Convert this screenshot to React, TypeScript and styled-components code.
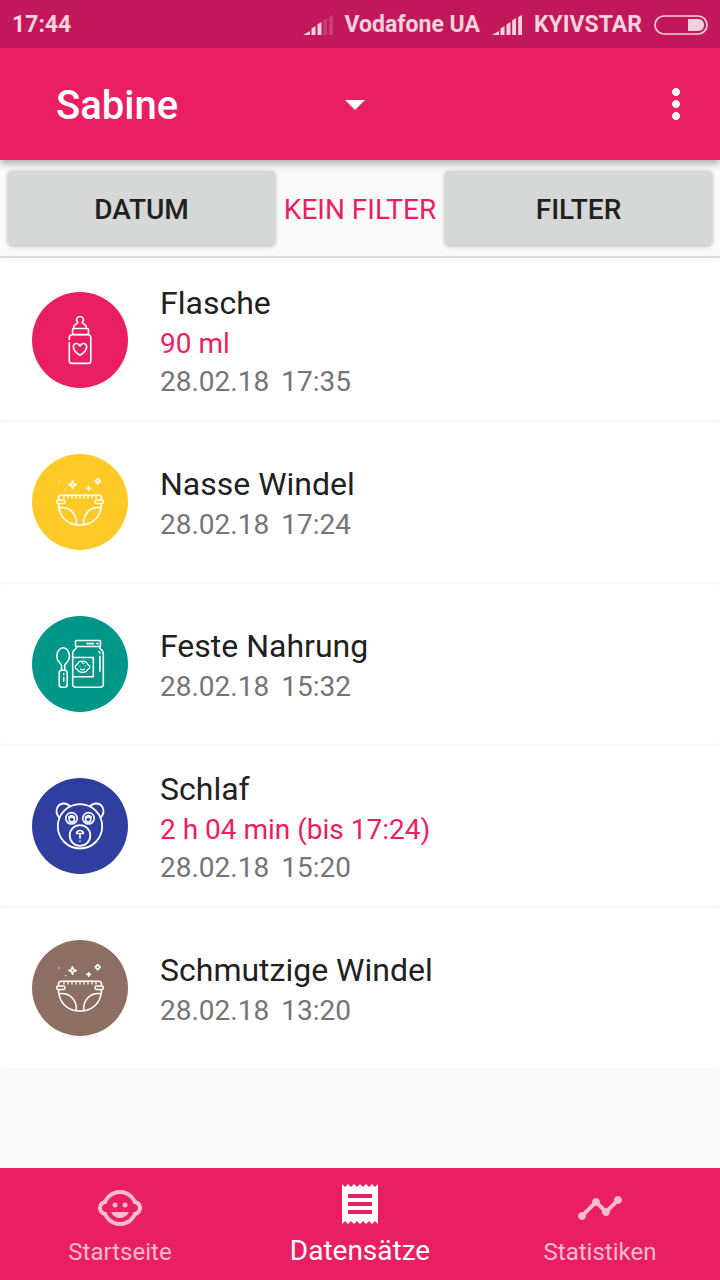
import React from "react";
import styled, { createGlobalStyle } from "styled-components";
import {
  MdArrowDropDown,
  MdChildCare,
  MdMoreVert,
  MdReceipt,
  MdTimeline,
} from "react-icons/md";

const PINK = "#ea1e63";

const GlobalStyle = createGlobalStyle`
  *, *::before, *::after { box-sizing: border-box; }
  body {
    margin: 0;
    background: #fafafa;
    color: #212121;
    font-family: Roboto, "Liberation Sans", sans-serif;
  }
  svg { display: block; }
`;

const Screen = styled.div`
  display: flex;
  flex-direction: column;
  min-height: 100vh;
`;

const StatusBar = styled.div`
  position: relative;
  z-index: 2;
  display: flex;
  align-items: center;
  gap: 12px;
  height: 48px;
  padding: 2px 12px 0;
  background: #c2185b;
  color: #f5d1de;
  font-size: 23px;
  font-weight: 700;
  line-height: 28px;
`;

const Clock = styled.time`
  margin-right: auto;
`;

const AppBar = styled.header`
  position: relative;
  z-index: 1;
  display: flex;
  align-items: center;
  justify-content: space-between;
  height: 112px;
  padding: 0 20px 0 56px;
  background: ${PINK};
  color: #fff;
  box-shadow: 0 3px 8px rgba(0, 0, 0, 0.35);
`;

const ChildPicker = styled.label`
  display: grid;
  flex: 0 1 323px;
  align-items: center;

  & > * { grid-area: 1 / 1; }
  & > svg { justify-self: end; pointer-events: none; }
`;

const ChildSelect = styled.select`
  appearance: none;
  width: 100%;
  height: 60px;
  padding: 4px 0 0;
  border: 0;
  background: transparent;
  color: inherit;
  font: 500 40px/56px Roboto, "Liberation Sans", sans-serif;

  option { color: #212121; }
`;

const IconButton = styled.button`
  padding: 0;
  border: 0;
  background: none;
  color: inherit;
`;

const FilterBar = styled.section`
  display: flex;
  align-items: center;
  gap: 8px;
  padding: 11px 8px;
  border-bottom: 2px solid #dcdcdc;
`;

const FilterButton = styled.button`
  flex: 1 1 0;
  height: 74px;
  padding: 4px 0 0;
  border: 0;
  border-radius: 4px;
  background: #d6d8d7;
  color: #212121;
  font: 500 28px/36px Roboto, "Liberation Sans", sans-serif;
  text-transform: uppercase;
  box-shadow: 0 1px 4px rgba(0, 0, 0, 0.3);
`;

const FilterState = styled.span`
  min-width: 154px;
  padding-top: 4px;
  color: ${PINK};
  font-size: 28px;
  line-height: 36px;
  text-align: center;
  text-transform: uppercase;
`;

const Records = styled.ul`
  display: flex;
  flex: 1;
  flex-direction: column;
  gap: 2px;
  margin: 0;
  padding: 2px 0;
  list-style: none;
`;

const Record = styled.li`
  display: flex;
  align-items: center;
  gap: 32px;
  height: 160px;
  padding: 0 32px;
  border-radius: 4px;
  background: #fff;
  box-shadow: 0 0 2px rgba(0, 0, 0, 0.05);
`;

const Badge = styled.span<{ $color: string }>`
  flex: none;
  width: 96px;
  height: 96px;
  border-radius: 50%;
  background: ${(p) => p.$color};
`;

const RecordText = styled.div`
  padding-top: 2px;
`;

const RecordTitle = styled.h2`
  margin: 0;
  font-size: 32px;
  font-weight: 400;
  line-height: 44px;
`;

const RecordDetail = styled.p`
  margin: 0;
  color: ${PINK};
  font-size: 28px;
  line-height: 38px;
`;

const RecordTime = styled.time`
  display: flex;
  gap: 12px;
  color: #757575;
  font-size: 28px;
  line-height: 38px;
`;

const BottomNav = styled.nav`
  display: flex;
  height: 112px;
  background: ${PINK};
`;

const NavLink = styled.a<{ $active?: boolean }>`
  display: flex;
  flex: 1 1 0;
  flex-direction: column;
  align-items: center;
  justify-content: space-between;
  padding: ${(p) => (p.$active ? "12px" : "16px")} 0 12px;
  color: ${(p) => (p.$active ? "#fff" : "#f9bbd0")};
  font-size: ${(p) => (p.$active ? "28px" : "24px")};
  line-height: ${(p) => (p.$active ? "34px" : "32px")};
  text-decoration: none;
`;

const BARS = [
  "M0 20 L7 16 V20Z",
  "M8.500 13.500 L12.500 11 V20 H8.500Z",
  "M14.500 9.500 L18.500 7 V20 H14.500Z",
  "M20.200 5.500 L24 3 V20 H20.200Z",
  "M26.200 2 L30 0 V20 H26.200Z",
];

const Signal = ({ level }: { level: number }) => (
  <svg width="30" height="20" viewBox="0 0 30 20" fill="currentColor" aria-hidden="true">
    {BARS.map((d, i) => (
      <path key={d} d={d} opacity={i < level ? 1 : 0.2} />
    ))}
  </svg>
);

const Battery = () => (
  <svg width="54" height="20" viewBox="0 0 54 20" aria-hidden="true">
    <rect x="1" y="1" width="52" height="18" rx="9" fill="none" stroke="currentColor" strokeWidth="1.700" />
    <path d="M34 4 H44 C48 4 50 7 50 10 C50 13 48 16 44 16 H34Z" fill="currentColor" />
  </svg>
);

const Drawing = ({ children }: { children: React.ReactNode }) => (
  <svg
    width="96"
    height="96"
    viewBox="0 0 96 96"
    fill="none"
    stroke="#fff"
    strokeWidth="1.600"
    strokeLinecap="round"
    strokeLinejoin="round"
    aria-hidden="true"
  >
    {children}
  </svg>
);

const BottleIcon = () => (
  <Drawing>
    <path d="M41.500 36.500 C41.500 33.500 43 32.300 45 31.500 C46 31 45.800 30.300 45.200 29.500 C43.500 27 45.200 24.500 48 24.500 C50.800 24.500 52.500 27 50.800 29.500 C50.200 30.300 50 31 51 31.500 C53 32.300 54.500 33.500 54.500 36.500" />
    <rect x="40.500" y="36.500" width="16" height="6" rx="1.500" />
    <path d="M37.300 47.500 V45.500 Q37.300 42.700 40 42.700 H56 Q58.800 42.700 58.800 45.500 V68.800 Q58.800 71.400 56 71.400 H40 Q37.300 71.400 37.300 68.800 V50.500" />
    <path d="M48 63.300 C45 61.500 41.400 58.500 41.400 55 C41.400 51 46 50.200 48 54 C50 50.200 54.600 51 54.600 55 C54.600 58.500 51 61.500 48 63.300Z" />
  </Drawing>
);

const DiaperIcon = () => (
  <Drawing>
    <path d="M26.500 46 V44 Q26.500 41.200 29.500 41.200 H66.500 Q69.500 41.200 69.500 44 V46" />
    <path d="M32 41.200 V44 M36 41.200 V44 M40 41.200 V44 M44 41.200 V44 M48 41.200 V44 M52 41.200 V44 M56 41.200 V44 M60 41.200 V44 M64 41.200 V44" strokeWidth="1.300" />
    <rect x="24.800" y="46" width="8" height="3.500" rx="1.200" />
    <rect x="63.200" y="46" width="8" height="3.500" rx="1.200" />
    <path d="M26.500 49.500 C26.500 62 35 71 48 71 C61 71 69.500 62 69.500 49.500" />
    <path d="M27.500 53.700 C38 52.500 45 60 44.300 70.500 M68.500 53.700 C58 52.500 51 60 51.700 70.500" />
    <path d="M40.500 26.800 L41.500 29.500 L44.200 30.500 L41.500 31.500 L40.500 34.200 L39.500 31.500 L36.800 30.500 L39.500 29.500Z" />
    <path d="M56.700 32.500 V36.300 M54.800 34.400 H58.600" />
    <path d="M65.700 24.600 L68.200 27.100 L65.700 29.600 L63.200 27.100Z" />
    <path d="M27 28 H27.100 M33.500 35.700 H33.600" strokeWidth="1.300" />
  </Drawing>
);

const JarIcon = () => (
  <Drawing>
    <rect x="43.500" y="24.500" width="25" height="6" rx="1" />
    <path d="M55 27.600 H61.500 M65 27.600 H66" />
    <path d="M44.500 30.500 C44.500 34 40.700 33.500 40.700 37.500 V68 Q40.700 71.300 44 71.300 H68 Q71.300 71.300 71.300 68 V37.500 C71.300 33.500 67.500 34 67.500 30.500" />
    <path d="M40.700 41.500 H61.300 V60.800 H40.700" />
    <path d="M67 35.500 Q67.900 36 67.900 37.200 M67.900 40.300 V55.300" />
    <path d="M45.200 48.700 C46.500 43.800 54.500 43.800 55.800 48.700 C58.500 49.500 58.500 52.500 55.800 53.300 C54 57.500 47 57.500 45.200 53.300 C42.500 52.500 42.500 49.500 45.200 48.700Z M50.500 45.300 Q49.500 47.500 52 47.500 M47.700 50 H47.800 M53.300 50 H53.400 M48.300 52.800 Q50.500 55 52.700 52.800" strokeWidth="1.200" />
    <path d="M29.500 54 V49.500 C29.500 47.500 24.800 46 24.800 40.500 C24.800 35.500 27.800 31.800 31.200 31.800 C34.600 31.800 37.500 35.500 37.500 40.500 C37.500 46 32.700 47.500 32.700 49.500 V54" />
    <rect x="27.200" y="54.300" width="8" height="17" rx="2.800" />
    <path d="M31.700 57.500 V58.500 M31.700 61.500 V65.300" />
  </Drawing>
);

const BearIcon = () => (
  <Drawing>
    <circle cx="48" cy="48.300" r="22.200" strokeWidth="1.800" />
    <path d="M26.800 39 C22 33 25.500 25.500 32 25.500 C34.500 25.500 36.500 26.700 38 28.500 M69.200 39 C74 33 70.500 25.500 64 25.500 C61.500 25.500 59.500 26.700 58 28.500" strokeWidth="1.800" />
    <circle cx="39.500" cy="40.300" r="5.700" />
    <circle cx="56.500" cy="40.300" r="5.700" />
    <circle cx="39.800" cy="41.500" r="2.600" />
    <circle cx="56.200" cy="41.500" r="2.600" />
    <path d="M36.500 39 Q39.700 35.800 42.800 39 M53.200 39 Q56.300 35.800 59.500 39" strokeWidth="1.300" />
    <circle cx="48" cy="57.500" r="10.300" strokeWidth="1.800" />
    <path d="M44.500 55.500 C45 51.500 51 51.500 51.500 55.500Z M48 56 V60.300 M48 63 V63.100" />
  </Drawing>
);

type Entry = {
  title: string;
  detail?: string;
  date: string;
  clock: string;
  color: string;
  icon: React.ReactNode;
};

const ENTRIES: Entry[] = [
  { title: "Flasche", detail: "90 ml", date: "28.02.18", clock: "17:35", color: PINK, icon: <BottleIcon /> },
  { title: "Nasse Windel", date: "28.02.18", clock: "17:24", color: "#ffca28", icon: <DiaperIcon /> },
  { title: "Feste Nahrung", date: "28.02.18", clock: "15:32", color: "#009688", icon: <JarIcon /> },
  { title: "Schlaf", detail: "2 h 04 min (bis 17:24)", date: "28.02.18", clock: "15:20", color: "#303f9f", icon: <BearIcon /> },
  { title: "Schmutzige Windel", date: "28.02.18", clock: "13:20", color: "#8d6e63", icon: <DiaperIcon /> },
];

export default function App() {
  return (
    <Screen>
      <GlobalStyle />
      <StatusBar>
        <Clock>17:44</Clock>
        <Signal level={3} />
        <span>Vodafone UA</span>
        <Signal level={5} />
        <span>KYIVSTAR</span>
        <Battery />
      </StatusBar>
      <AppBar>
        <ChildPicker>
          <ChildSelect aria-label="Kind" defaultValue="Sabine">
            <option>Sabine</option>
          </ChildSelect>
          <MdArrowDropDown size={48} aria-hidden="true" />
        </ChildPicker>
        <IconButton type="button" aria-label="Menü">
          <MdMoreVert size={48} />
        </IconButton>
      </AppBar>
      <FilterBar>
        <FilterButton type="button">Datum</FilterButton>
        <FilterState>Kein Filter</FilterState>
        <FilterButton type="button">Filter</FilterButton>
      </FilterBar>
      <Records>
        {ENTRIES.map((entry) => (
          <Record key={entry.clock}>
            <Badge $color={entry.color}>{entry.icon}</Badge>
            <RecordText>
              <RecordTitle>{entry.title}</RecordTitle>
              {entry.detail && <RecordDetail>{entry.detail}</RecordDetail>}
              <RecordTime>
                <span>{entry.date}</span>
                <span>{entry.clock}</span>
              </RecordTime>
            </RecordText>
          </Record>
        ))}
      </Records>
      <BottomNav>
        <NavLink href="#start">
          <MdChildCare size={48} aria-hidden="true" />
          Startseite
        </NavLink>
        <NavLink href="#records" $active aria-current="page">
          <MdReceipt size={48} aria-hidden="true" />
          Datensätze
        </NavLink>
        <NavLink href="#stats">
          <MdTimeline size={48} aria-hidden="true" />
          Statistiken
        </NavLink>
      </BottomNav>
    </Screen>
  );
}
